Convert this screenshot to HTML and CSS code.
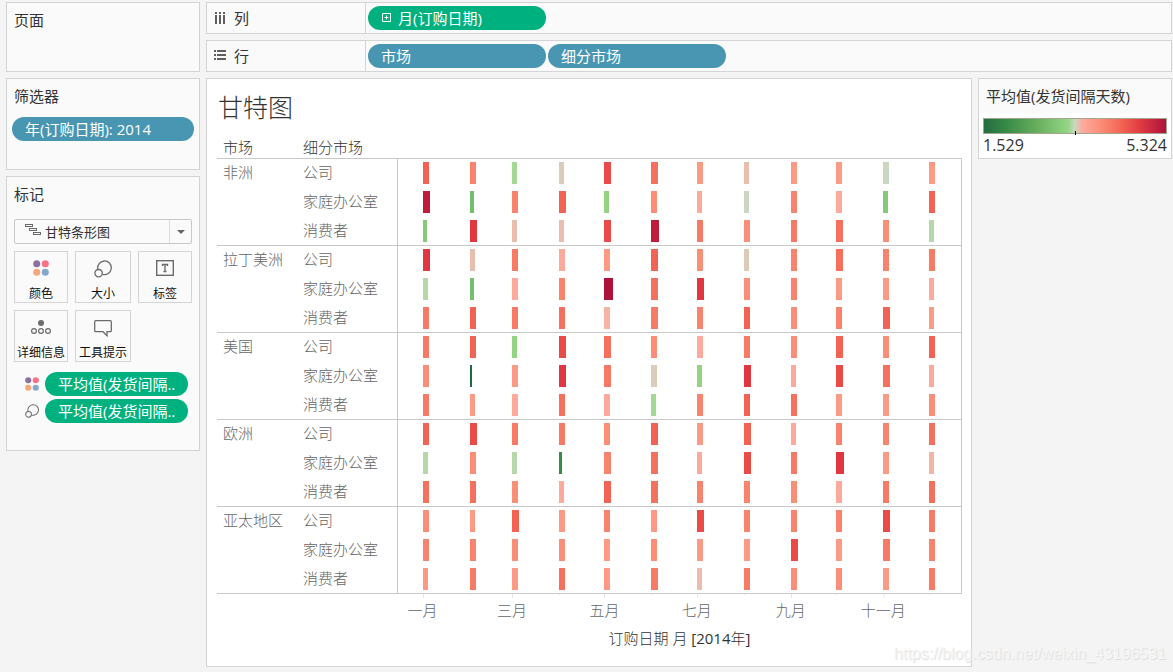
FILE: index.html
```html
<!DOCTYPE html>
<html lang="zh-CN">
<head>
<meta charset="utf-8">
<title>甘特图</title>
<link rel="stylesheet" href="styles.css">
</head>
<body>
<svg class="defs" aria-hidden="true">
  <symbol id="icon-color" viewBox="0 0 16 16">
    <circle cx="3.7" cy="3.7" r="3.5" fill="#8b70a0"/><circle cx="12.3" cy="3.7" r="3.5" fill="#f97287"/>
    <circle cx="3.7" cy="12.3" r="3.5" fill="#f5a878"/><circle cx="12.3" cy="12.3" r="3.5" fill="#82a8cf"/>
  </symbol>
  <symbol id="icon-size" viewBox="0 0 18 18">
    <path d="M3.9 9.4A6.800 6.800 0 1 1 8.600 14.300" fill="none" stroke="#6b6b6b" stroke-width="1.3"/>
    <circle cx="4.600" cy="13.200" r="3.700" fill="none" stroke="#6b6b6b" stroke-width="1.3"/>
  </symbol>
</svg>
<div class="workspace">
  <aside class="side">
    <section class="card pages"><h2 class="card-title">页面</h2></section>
    <section class="card filters">
      <h2 class="card-title">筛选器</h2>
      <button class="pill blue" type="button">年(订购日期): 2014</button>
    </section>
    <section class="card marks">
      <h2 class="card-title">标记</h2>
      <div class="mark-type">
        <svg class="gantt-icon" viewBox="0 0 16 12" width="16" height="12" fill="none" stroke="#6b6b6b">
          <rect x=".5" y=".5" width="7" height="2"/><rect x="4.5" y="4.5" width="7" height="2"/><rect x="8.5" y="8.5" width="7" height="2"/>
        </svg>
        <select class="mark-select" aria-label="标记类型"><option>甘特条形图</option></select>
        <span class="mark-arrow"></span>
      </div>
      <div class="mark-buttons">
        <button class="mark-button" type="button"><svg width="16" height="16"><use href="#icon-color"/></svg>颜色</button>
        <button class="mark-button" type="button"><svg width="18" height="18"><use href="#icon-size"/></svg>大小</button>
        <button class="mark-button" type="button">
          <svg width="18" height="16" viewBox="0 0 18 16"><rect x=".7" y=".7" width="16.6" height="14.6" fill="none" stroke="#6b6b6b" stroke-width="1.4"/><path d="M6.500 6V4.500h5V6M9 4.500v7M7.500 11.500h3" fill="none" stroke="#6b6b6b" stroke-width="1.3"/></svg>标签
        </button>
        <button class="mark-button" type="button">
          <svg width="20" height="16" viewBox="0 0 20 16"><circle cx="10" cy="4" r="3" fill="#6b6b6b"/><g fill="none" stroke="#6b6b6b" stroke-width="1.2"><circle cx="3" cy="12" r="2.4"/><circle cx="10" cy="12" r="2.4"/><circle cx="17" cy="12" r="2.4"/></g></svg>详细信息
        </button>
        <button class="mark-button" type="button">
          <svg width="18" height="18" viewBox="0 0 18 18"><path d="M1.700 1.700h14.600q1 0 1 1v9q0 1-1 1H13v4l-4-4H1.700q-1 0-1-1v-9q0-1 1-1z" fill="none" stroke="#6b6b6b" stroke-width="1.3"/></svg>工具提示
        </button>
      </div>
      <div class="encodings">
        <div class="encoding"><svg width="14" height="14"><use href="#icon-color"/></svg><button class="pill green" type="button">平均值(发货间隔..</button></div>
        <div class="encoding"><svg width="14" height="14"><use href="#icon-size"/></svg><button class="pill green" type="button">平均值(发货间隔..</button></div>
      </div>
    </section>
  </aside>
  <main class="main">
    <section class="shelf">
      <h2 class="shelf-label">
        <svg width="12" height="12" viewBox="0 0 12 12" fill="#5f5f5f"><path d="M1 0h2v2H1zM5 0h2v2H5zM9 0h2v2H9zM1 3h2v9H1zM5 3h2v9H5zM9 3h2v9H9z"/></svg>列
      </h2>
      <div class="shelf-pills">
        <button class="pill green" type="button"><svg width="10" height="10" viewBox="0 0 10 10"><path d="M1.500.500h8v8h-8zM5.500 2.500v4M3.500 4.500h4" fill="none" stroke="#fff"/></svg>月(订购日期)</button>
      </div>
    </section>
    <section class="shelf">
      <h2 class="shelf-label">
        <svg width="12" height="12" viewBox="0 0 12 12" fill="#5f5f5f"><path d="M0 0h2v2H0zM3 0h9v2H3zM0 4h2v2H0zM3 4h9v2H3zM0 8h2v2H0zM3 8h9v2H3z"/></svg>行
      </h2>
      <div class="shelf-pills">
        <button class="pill blue" type="button">市场</button>
        <button class="pill blue" type="button">细分市场</button>
      </div>
    </section>
    <div class="content">
      <section class="view">
        <h1 class="view-title">甘特图</h1>
        <table class="chart">
          <colgroup><col class="col-market"><col class="col-segment"><col></colgroup>
          <thead><tr><th>市场</th><th>细分市场</th><td></td></tr></thead>
          <tbody id="rows"></tbody>
          <tfoot><tr><td colspan="2"></td><td>
            <div class="axis" id="axis"></div>
            <div class="axis-title">订购日期 月 <span class="year">[2014</span>年<span class="year">]</span></div>
          </td></tr></tfoot>
        </table>
      </section>
      <aside class="legend">
        <h2 class="legend-title">平均值(发货间隔天数)</h2>
        <div class="legend-body">
          <div class="ramp"></div>
          <div class="ramp-labels"><span>1.529</span><span>5.324</span></div>
        </div>
      </aside>
    </div>
  </main>
</div>
<div class="watermark">https://blog.csdn.net/weixin_43196531</div>
<script src="chart.js"></script>
</body>
</html>
```
FILE: chart.js
```js
const COLORS = {
  a: '#fda99b', b: '#fd9a86', c: '#fb8e77', d: '#f9846d', e: '#f77a64', f: '#f5705d',
  g: '#f26353', h: '#e94b47', i: '#df3841', j: '#c01b3a', k: '#ac123a', m: '#f5b3a4',
  n: '#e9beae', o: '#dbcbb9', p: '#cbd7c0', q: '#b5d7a9', r: '#a5d796', s: '#93d381',
  t: '#85ca78', u: '#76bf6c', v: '#388c48', w: '#206b3d'
};

// First day of each month, counted from 1 January.
const MONTH_STARTS = [0, 31, 59, 90, 120, 151, 181, 212, 243, 273, 304, 334];
const AXIS_LABELS = ['一月', '三月', '五月', '七月', '九月', '十一月'];
const SEGMENTS = ['公司', '家庭办公室', '消费者'];

// One string per segment: a bar width and a colour key for each month.
const MARKETS = [
  ['非洲', [
    '6g 6d 5r 5o 7h 7f 6b 5n 6b 6b 6p 6b',
    '7j 4u 6d 7g 5s 6c 5a 5p 6d 6a 5t 6g',
    '4t 7i 5n 5n 7h 8j 6e 6c 6e 7f 6c 5q']],
  ['拉丁美洲', [
    '7i 5n 6e 6a 6b 7g 6c 5o 6d 7f 6d 6e',
    '5q 4u 6a 6d 9k 7f 7i 6c 6d 6b 6b 5a',
    '6e 6g 6e 6f 6m 7e 6d 6g 6c 6d 7g 5b']],
  ['美国', [
    '6e 6g 5s 7h 7f 6c 6a 6e 6c 7g 6c 6g',
    '6c 2w 6b 7i 7e 6o 5s 7i 5a 7h 7f 5a',
    '6e 5b 6a 6f 6a 5r 6d 6g 6f 6b 6b 6c']],
  ['欧洲', [
    '6g 7h 6e 6e 6c 7g 6b 7g 5a 6d 6d 6f',
    '5q 6c 5q 3v 7d 7f 5a 7h 6e 8i 6b 5m',
    '6f 6f 6c 5a 7g 7f 6d 6d 6c 6a 6e 6f']],
  ['亚太地区', [
    '6c 5b 7g 6b 6d 6b 7h 6d 6d 6d 7h 6e',
    '6d 6d 6c 6c 6b 6c 6b 6b 7h 6b 7e 6d',
    '5b 6e 6b 6f 6b 7e 5n 6e 6c 6c 6b 6e']]
];

const position = day => ((day + 16.25) / 371.6 * 100).toFixed(3) + '%';

document.getElementById('rows').innerHTML = MARKETS.map(([market, rows]) =>
  rows.map((row, r) => {
    const bars = row.split(' ').map((mark, m) =>
      `<i class="bar" style="left:${position(MONTH_STARTS[m])};width:${mark[0]}px;background:${COLORS[mark[1]]}"></i>`
    ).join('');
    const head = r === 0 ? `<th class="market" rowspan="3">${market}</th>` : '';
    return `<tr class="${r === 0 ? 'group' : ''}">${head}<th>${SEGMENTS[r]}</th><td class="plot"><div class="track">${bars}</div></td></tr>`;
  }).join('')
).join('');

document.getElementById('axis').innerHTML = MONTH_STARTS.map((day, m) =>
  `<span class="tick${m % 2 ? ' minor' : ''}" style="left:${position(day)}">${m % 2 ? '' : AXIS_LABELS[m / 2]}</span>`
).join('');
```
FILE: styles.css
```css
* { box-sizing: border-box; }

body {
  margin: 0;
  background: #f4f4f4;
  color: #333;
  font: 15px/20px "Open Sans", "Noto Sans CJK SC", sans-serif;
}

button, select { font: inherit; color: inherit; }
h1, h2 { margin: 0; font-weight: 400; }
.defs { display: none; }

.workspace {
  display: grid;
  grid-template-columns: 194px minmax(0, 1fr);
  gap: 6px;
  min-height: 100vh;
  padding: 2px 1px 5px 6px;
}

.side { display: flex; flex-direction: column; gap: 6px; }
.main { display: flex; flex-direction: column; gap: 6px; }

.card {
  padding: 7px 5px;
  border: 1px solid #d4d4d4;
  background: #fafafa;
}
.pages { min-height: 70px; }
.filters { min-height: 92px; }
.marks { min-height: 275px; padding: 7px; }
.card-title { font-size: 15px; line-height: 20px; }
.pages .card-title, .filters .card-title { padding-left: 2px; }

.pill {
  display: flex;
  align-items: center;
  gap: 7px;
  height: 24px;
  padding: 0 13px;
  border: 0;
  border-radius: 12px;
  color: #fff;
  line-height: 24px;
  white-space: nowrap;
}
.blue { background: #4996b2; }
.green { background: #00b180; }
.filters .pill { width: 100%; margin-top: 11px; }

.mark-type {
  position: relative;
  display: flex;
  margin-top: 15px;
}
.mark-select {
  width: 100%;
  height: 25px;
  padding: 0 30px;
  border: 1px solid #c8c8c8;
  border-radius: 2px;
  background: #fafafa;
  font-size: 13px;
  appearance: none;
}
.gantt-icon { position: absolute; left: 11px; top: 5px; }
.mark-arrow {
  position: absolute;
  inset: 1px 1px 1px auto;
  display: grid;
  place-items: center;
  width: 22px;
  border-left: 1px solid #dcdcdc;
  pointer-events: none;
}
.mark-arrow::after {
  content: "";
  border: 4px solid transparent;
  border-top-color: #666;
  border-bottom: 0;
}

.mark-buttons {
  display: grid;
  grid-template-columns: 54fr 56fr 54fr;
  gap: 7px;
  margin-top: 7px;
}
.mark-button {
  display: flex;
  flex-direction: column;
  align-items: center;
  justify-content: space-between;
  height: 52px;
  padding: 8px 0 0;
  border: 1px solid #d4d4d4;
  background: #fafafa;
  color: #111;
  font-size: 12px;
  line-height: 16px;
  white-space: nowrap;
}

.encodings { display: grid; gap: 3px; margin: 10px 5px 0 11px; }
.encoding { display: grid; grid-template-columns: 14px 1fr; gap: 6px; align-items: center; }

.shelf {
  display: flex;
  height: 32px;
  border: 1px solid #d4d4d4;
  background: #fafafa;
}
.shelf-label {
  display: flex;
  align-items: center;
  gap: 8px;
  width: 159px;
  padding-left: 7px;
  border-right: 1px solid #d4d4d4;
  font-size: 15px;
}
.shelf-pills { display: flex; align-items: center; gap: 2px; padding-left: 2px; }
.shelf-pills .pill { width: 178px; }

.content {
  display: grid;
  grid-template-columns: minmax(0, 1fr) 194px;
  gap: 6px;
  flex: 1;
}
.view {
  padding: 12px 9px 12px 10px;
  border: 1px solid #d4d4d4;
  background: #fff;
}
.view-title {
  padding-left: 1px;
  font-size: 25px;
  font-weight: 300;
  line-height: 32px;
}

.chart {
  width: 100%;
  margin-top: 14px;
  border-spacing: 0;
  table-layout: fixed;
  font-weight: 300;
}
.col-market { width: 80px; }
.col-segment { width: 100px; }
.chart th {
  height: 29px;
  padding: 0 0 2px 6px;
  color: #666;
  font-weight: 300;
  text-align: left;
  vertical-align: middle;
}
.chart td { padding: 0; }
.chart thead th { height: 21px; padding-bottom: 1px; color: #333; line-height: 18px; }
.chart .market { padding-top: 3px; vertical-align: top; }
.group > * { border-top: 1px solid #c8c8c8; }
.chart .plot {
  padding: 4px 0 3px;
  border-left: 1px solid #c8c8c8;
  border-right: 1px solid #c8c8c8;
}
.chart .group .plot { padding-top: 3px; }
.track { position: relative; height: 22px; }
.bar { position: absolute; top: 0; height: 100%; }

.chart tfoot td { border-top: 1px solid #c8c8c8; }
.axis { position: relative; height: 33px; margin: 0 1px; }
.tick {
  position: absolute;
  top: 0;
  padding-top: 6px;
  color: #666;
  white-space: nowrap;
  transform: translateX(-50%);
}
.tick::before {
  content: "";
  position: absolute;
  top: 0;
  left: 50%;
  width: 1px;
  height: 4px;
  background: #e6e6e6;
}
.minor::before { height: 1px; }
.axis-title { text-align: center; line-height: 22px; }
.year { font-weight: 400; }

.legend {
  align-self: start;
  border: 1px solid #d4d4d4;
  background: #fff;
}
.legend-title {
  padding: 7px;
  background: #fafafa;
  font-size: 15px;
  line-height: 20px;
}
.legend-body { padding: 5px 4px 2px; }
.ramp {
  position: relative;
  height: 16px;
  border: 1px solid #a5a592;
  background: linear-gradient(90deg, #256d40, #388c48 13%, #67ae5e 29%, #93d684 46%, #cbd8c0 50%, #fdaa9e 54%, #fb8e77 64%, #f26253 76%, #e03a41 86%, #ad123a);
}
.ramp::after {
  content: "";
  position: absolute;
  left: 50%;
  bottom: -2px;
  width: 1px;
  height: 4px;
  background: #000;
}
.ramp-labels { display: flex; justify-content: space-between; font-size: 16px; line-height: 22px; }

.watermark {
  position: absolute;
  right: 7px;
  bottom: 8px;
  color: #f6f6f6;
  font: 16px/20px "Liberation Sans", sans-serif;
  text-shadow: 1px 1px 1px #dcdcdc;
}
```
